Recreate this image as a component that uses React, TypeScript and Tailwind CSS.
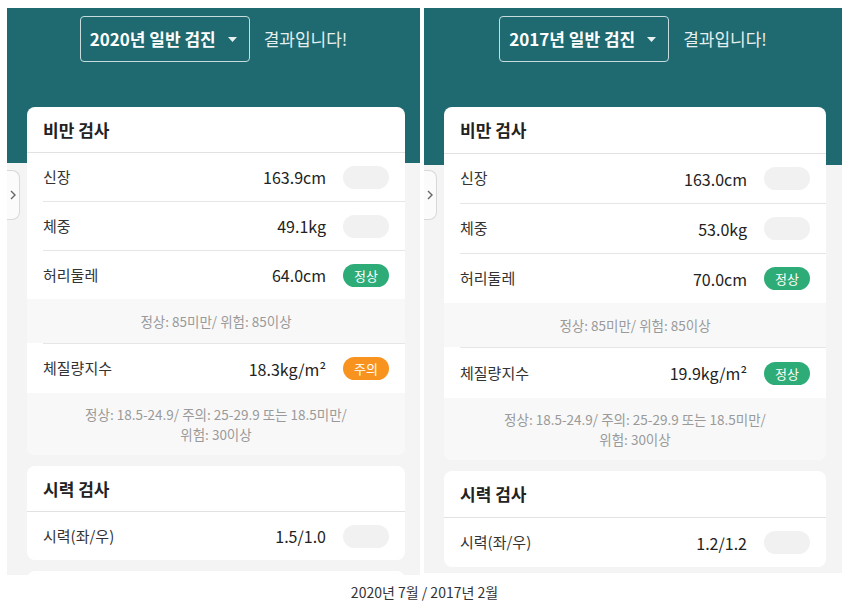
import React from "react";

type Badge = "none" | "normal" | "warn";

interface Measure {
  label: string;
  value: string;
  badge: Badge;
  note?: string[];
}

interface PanelProps {
  year: string;
  width: number;
  height: number;
  tealH: number;
  overlap: number;
  rowH: number;
  titleH: number;
  padR: number;
  body: Measure[];
  eye: Measure[];
}

const FONT = { fontFamily: '"Noto Sans CJK KR", "Noto Sans", sans-serif' };

function StatusBadge({ badge }: { badge: Badge }) {
  if (badge === "none") {
    return <span className="w-[46px] h-[23px] rounded-full bg-[#f1f1f1] shrink-0" />;
  }
  return (
    <span
      className={
        badge === "normal"
          ? "w-[46px] h-[23px] rounded-full bg-[#2eac78] text-white text-[13px] leading-[23px] text-center shrink-0"
          : "w-[46px] h-[23px] rounded-full bg-[#f7931e] text-white text-[13px] leading-[23px] text-center shrink-0"
      }
    >
      {badge === "normal" ? "정상" : "주의"}
    </span>
  );
}

function Card({
  title,
  items,
  rowH,
  titleH,
}: {
  title: string;
  items: Measure[];
  rowH: number;
  titleH: number;
}) {
  return (
    <div className="bg-white rounded-[8px] overflow-hidden">
      <div
        className="flex items-center pl-[16px] border-b border-[#e2e2e2] text-[17px] font-bold text-[#222]"
        style={{ height: titleH }}
      >
        {title}
      </div>
      {items.map((m, i) => (
        <div key={m.label}>
          <div className={i === 0 ? "ml-[16px]" : "ml-[16px] border-t border-[#e6e6e6]"}>
            {/* rows that follow a note sit one pixel taller */}
            <div
              className="flex items-center pr-[16px]"
              style={{ height: i > 0 && items[i - 1].note ? rowH + 1 : rowH }}
            >
              <span className="flex-1 text-[15px] text-[#333]">{m.label}</span>
              <span className="text-[16px] text-[#222] mr-[17px]">{m.value}</span>
              <StatusBadge badge={m.badge} />
            </div>
          </div>
          {m.note && (
            <div
              className={
                m.note.length > 1
                  ? "bg-[#f8f8f8] py-[11px] text-center text-[13.5px] leading-[20px] text-[#9a9a9a]"
                  : "bg-[#f8f8f8] py-[12px] text-center text-[13.5px] leading-[20px] text-[#9a9a9a]"
              }
            >
              {m.note.map((n) => (
                <div key={n}>{n}</div>
              ))}
            </div>
          )}
        </div>
      ))}
    </div>
  );
}

function Panel(p: PanelProps) {
  return (
    <div
      className="relative bg-[#f4f4f4] overflow-hidden shrink-0"
      style={{ width: p.width, height: p.height }}
    >
      <div className="bg-[#1e6a70] pt-[8px]" style={{ height: p.tealH }}>
        <div className="flex items-center justify-center gap-[14px]">
          <div className="flex items-center h-[46px] pl-[9px] pr-[12px] border border-[#c9dcdd] rounded-[4px] gap-[12px]">
            <span className="text-[17px] font-bold text-white">{p.year}년 일반 검진</span>
            <svg width="9" height="5" viewBox="0 0 9 5">
              <path d="M0 0h9L4.5 5z" fill="#e8f0f0" />
            </svg>
          </div>
          <span className="text-[17px] text-[#e6efef]">결과입니다!</span>
        </div>
      </div>

      <div
        className="pl-[20px] flex flex-col gap-[11px]"
        style={{ marginTop: -p.overlap, paddingRight: p.padR }}
      >
        <Card title="비만 검사" items={p.body} rowH={p.rowH} titleH={p.titleH} />
        <Card title="시력 검사" items={p.eye} rowH={p.rowH} titleH={p.titleH} />
        <div className="bg-white rounded-[8px] h-[60px]" />
      </div>

      <div className="absolute left-0 top-[162px] w-[13px] h-[50px] bg-[#fbfbfb] border border-l-0 border-[#d8d8d8] rounded-r-[8px] flex items-center justify-center">
        <svg width="6" height="10" viewBox="0 0 6 10">
          <path d="M1 1l4 4-4 4" fill="none" stroke="#666" strokeWidth="1.4" />
        </svg>
      </div>
    </div>
  );
}

const BMI_NOTE = ["정상: 18.5-24.9/ 주의: 25-29.9 또는 18.5미만/", "위험: 30이상"];
const WAIST_NOTE = ["정상: 85미만/ 위험: 85이상"];

export default function App() {
  return (
    <div className="w-[860px] h-[615px] bg-white" style={FONT}>
      <div className="w-[835px] ml-[7px] pt-[8px]">
        <div className="flex gap-[4px]">
          <Panel
            year="2020"
            width={413}
            height={567}
            tealH={155}
            overlap={56}
            rowH={48}
            titleH={46}
            padR={15}
            body={[
              { label: "신장", value: "163.9cm", badge: "none" },
              { label: "체중", value: "49.1kg", badge: "none" },
              { label: "허리둘레", value: "64.0cm", badge: "normal", note: WAIST_NOTE },
              { label: "체질량지수", value: "18.3kg/m²", badge: "warn", note: BMI_NOTE },
            ]}
            eye={[{ label: "시력(좌/우)", value: "1.5/1.0", badge: "none" }]}
          />
          <Panel
            year="2017"
            width={418}
            height={565}
            tealH={157}
            overlap={58}
            rowH={49}
            titleH={47}
            padR={16}
            body={[
              { label: "신장", value: "163.0cm", badge: "none" },
              { label: "체중", value: "53.0kg", badge: "none" },
              { label: "허리둘레", value: "70.0cm", badge: "normal", note: WAIST_NOTE },
              { label: "체질량지수", value: "19.9kg/m²", badge: "normal", note: BMI_NOTE },
            ]}
            eye={[{ label: "시력(좌/우)", value: "1.2/1.2", badge: "none" }]}
          />
        </div>
        <div className="mt-[7px] text-center text-[14px] leading-[20px] text-[#333]">
          2020년 7월 / 2017년 2월
        </div>
      </div>
    </div>
  );
}
